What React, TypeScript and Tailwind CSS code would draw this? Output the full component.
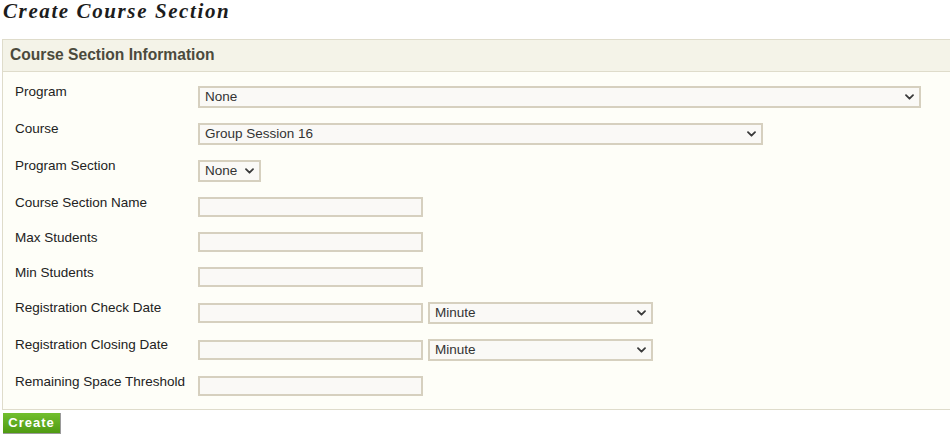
import React from 'react';

const font = { fontFamily: '"Liberation Sans", Arial, sans-serif' };

const TextBox = () => (
  <input
    type="text"
    className="block w-[225px] h-[20px] border-2 border-[#d6d0bf] bg-[#faf9f6] px-1 text-[13.5px] text-[#333] outline-none"
  />
);

const Select = ({ value, options, className }: { value: string; options: string[]; className: string }) => (
  <div className={`relative h-[22px] ${className}`}>
    <select
      defaultValue={value}
      className="block h-full w-full appearance-none border-2 border-[#d6d0bf] bg-[#faf9f6] pl-[5px] pr-5 text-[13.5px] leading-4 text-[#333] outline-none"
    >
      {options.map(o => (
        <option key={o}>{o}</option>
      ))}
    </select>
    <svg
      className="pointer-events-none absolute right-[7px] top-[8px] h-[6px] w-[9px]"
      viewBox="0 0 9 6"
      fill="none"
      stroke="#3a3a3a"
      strokeWidth="1.8"
      strokeLinecap="round"
      strokeLinejoin="round"
    >
      <path d="M1 1.2l3.5 3.5 3.5-3.5" />
    </svg>
  </div>
);

const Row = ({ label, children }: { label: string; children: React.ReactNode }) => (
  <div className="flex items-start">
    <div className="w-[183px] shrink-0 -mt-[2px] text-[13.5px] leading-4 text-[#222]">{label}</div>
    <div className="flex items-center gap-[5px]">{children}</div>
  </div>
);

export default function App() {
  return (
    <div className="w-[950px] h-[444px] overflow-hidden bg-white" style={font}>
      {/* Title */}
      <h1
        className="pl-[3px] h-[39px] text-[21px] leading-[22px] font-bold italic tracking-[1.6px] text-[#1c1c1c]"
        style={{ fontFamily: '"Liberation Serif", "Times New Roman", serif' }}
      >
        Create Course Section
      </h1>

      {/* Panel */}
      <div className="ml-[2px] w-[960px] border border-[#dfdccb] bg-[#fefef8]">
        <div className="h-[32px] border-b border-[#dfdccb] bg-[#f4f3e8] pl-[7px] pt-[6px] text-[15.6px] leading-[18px] font-bold text-[#4b4a3c]">
          Course Section Information
        </div>
        <div className="flex flex-col gap-[15px] pl-[12px] pt-[14px] pb-[13px]">
          <Row label="Program">
            <Select value="None" options={['None']} className="w-[723px]" />
          </Row>
          <Row label="Course">
            <Select value="Group Session 16" options={['Group Session 16']} className="w-[565px]" />
          </Row>
          <Row label="Program Section">
            <Select value="None" options={['None']} className="w-[63px]" />
          </Row>
          <Row label="Course Section Name">
            <TextBox />
          </Row>
          <Row label="Max Students">
            <TextBox />
          </Row>
          <Row label="Min Students">
            <TextBox />
          </Row>
          <Row label="Registration Check Date">
            <TextBox />
            <Select value="Minute" options={['Minute', 'Hour', 'Day']} className="w-[225px]" />
          </Row>
          <Row label="Registration Closing Date">
            <TextBox />
            <Select value="Minute" options={['Minute', 'Hour', 'Day']} className="w-[225px]" />
          </Row>
          <Row label="Remaining Space Threshold">
            <TextBox />
          </Row>
        </div>
      </div>

      {/* Submit */}
      <button className="ml-[3px] h-[21px] w-[58px] border-r border-b border-[#9a9a9a] bg-gradient-to-b from-[#72bf2e] to-[#4f9a12] text-[13px] leading-[20px] font-bold tracking-[1px] text-white">
        Create
      </button>
    </div>
  );
}
